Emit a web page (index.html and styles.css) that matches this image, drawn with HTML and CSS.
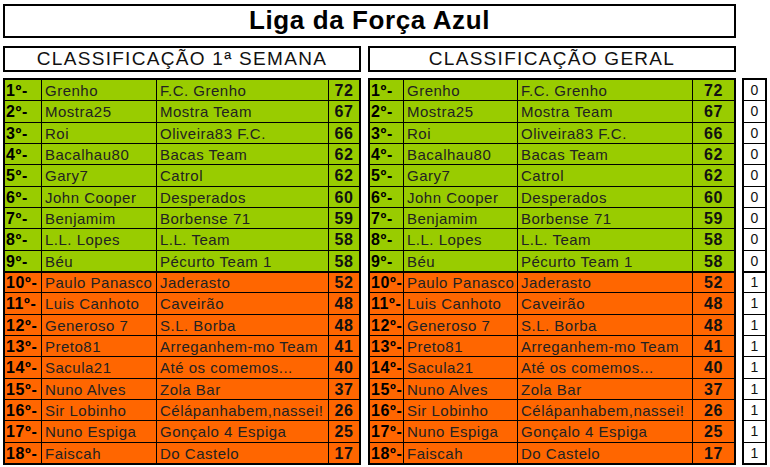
FILE: index.html
```html
<!DOCTYPE html>
<html>
<head>
<meta charset="utf-8">
<link rel="stylesheet" href="styles.css">
</head>
<body>
<div class="page">
  <div class="title">Liga da Força Azul</div>
  <div class="heads">
    <div class="head head-l">CLASSIFICAÇÃO 1ª SEMANA</div>
    <div class="head head-r">CLASSIFICAÇÃO GERAL</div>
  </div>
  <div class="tables">
    <div class="tbl tbl-l">
      <div class="c g rk">1º-</div><div class="c g">Grenho</div><div class="c g">F.C. Grenho</div><div class="c g pt">72</div>
      <div class="c g rk">2º-</div><div class="c g">Mostra25</div><div class="c g">Mostra Team</div><div class="c g pt">67</div>
      <div class="c g rk">3º-</div><div class="c g">Roi</div><div class="c g">Oliveira83 F.C.</div><div class="c g pt">66</div>
      <div class="c g rk">4º-</div><div class="c g">Bacalhau80</div><div class="c g">Bacas Team</div><div class="c g pt">62</div>
      <div class="c g rk">5º-</div><div class="c g">Gary7</div><div class="c g">Catrol</div><div class="c g pt">62</div>
      <div class="c g rk">6º-</div><div class="c g">John Cooper</div><div class="c g">Desperados</div><div class="c g pt">60</div>
      <div class="c g rk">7º-</div><div class="c g">Benjamim</div><div class="c g">Borbense 71</div><div class="c g pt">59</div>
      <div class="c g rk">8º-</div><div class="c g">L.L. Lopes</div><div class="c g">L.L. Team</div><div class="c g pt">58</div>
      <div class="c g rk">9º-</div><div class="c g">Béu</div><div class="c g">Pécurto Team 1</div><div class="c g pt">58</div>
      <div class="c o sep rk">10º-</div><div class="c o sep">Paulo Panasco</div><div class="c o sep">Jaderasto</div><div class="c o sep pt">52</div>
      <div class="c o rk">11º-</div><div class="c o">Luis Canhoto</div><div class="c o">Caveirão</div><div class="c o pt">48</div>
      <div class="c o rk">12º-</div><div class="c o">Generoso 7</div><div class="c o">S.L. Borba</div><div class="c o pt">48</div>
      <div class="c o rk">13º-</div><div class="c o">Preto81</div><div class="c o">Arreganhem-mo Team</div><div class="c o pt">41</div>
      <div class="c o rk">14º-</div><div class="c o">Sacula21</div><div class="c o">Até os comemos...</div><div class="c o pt">40</div>
      <div class="c o rk">15º-</div><div class="c o">Nuno Alves</div><div class="c o">Zola Bar</div><div class="c o pt">37</div>
      <div class="c o rk">16º-</div><div class="c o">Sir Lobinho</div><div class="c o">Célápanhabem,nassei!</div><div class="c o pt">26</div>
      <div class="c o rk">17º-</div><div class="c o">Nuno Espiga</div><div class="c o">Gonçalo 4 Espiga</div><div class="c o pt">25</div>
      <div class="c o rk">18º-</div><div class="c o">Faiscah</div><div class="c o">Do Castelo</div><div class="c o pt">17</div>
    </div>
    <div class="tbl tbl-r">
      <div class="c g rk">1º-</div><div class="c g">Grenho</div><div class="c g">F.C. Grenho</div><div class="c g pt">72</div>
      <div class="c g rk">2º-</div><div class="c g">Mostra25</div><div class="c g">Mostra Team</div><div class="c g pt">67</div>
      <div class="c g rk">3º-</div><div class="c g">Roi</div><div class="c g">Oliveira83 F.C.</div><div class="c g pt">66</div>
      <div class="c g rk">4º-</div><div class="c g">Bacalhau80</div><div class="c g">Bacas Team</div><div class="c g pt">62</div>
      <div class="c g rk">5º-</div><div class="c g">Gary7</div><div class="c g">Catrol</div><div class="c g pt">62</div>
      <div class="c g rk">6º-</div><div class="c g">John Cooper</div><div class="c g">Desperados</div><div class="c g pt">60</div>
      <div class="c g rk">7º-</div><div class="c g">Benjamim</div><div class="c g">Borbense 71</div><div class="c g pt">59</div>
      <div class="c g rk">8º-</div><div class="c g">L.L. Lopes</div><div class="c g">L.L. Team</div><div class="c g pt">58</div>
      <div class="c g rk">9º-</div><div class="c g">Béu</div><div class="c g">Pécurto Team 1</div><div class="c g pt">58</div>
      <div class="c o sep rk">10º-</div><div class="c o sep">Paulo Panasco</div><div class="c o sep">Jaderasto</div><div class="c o sep pt">52</div>
      <div class="c o rk">11º-</div><div class="c o">Luis Canhoto</div><div class="c o">Caveirão</div><div class="c o pt">48</div>
      <div class="c o rk">12º-</div><div class="c o">Generoso 7</div><div class="c o">S.L. Borba</div><div class="c o pt">48</div>
      <div class="c o rk">13º-</div><div class="c o">Preto81</div><div class="c o">Arreganhem-mo Team</div><div class="c o pt">41</div>
      <div class="c o rk">14º-</div><div class="c o">Sacula21</div><div class="c o">Até os comemos...</div><div class="c o pt">40</div>
      <div class="c o rk">15º-</div><div class="c o">Nuno Alves</div><div class="c o">Zola Bar</div><div class="c o pt">37</div>
      <div class="c o rk">16º-</div><div class="c o">Sir Lobinho</div><div class="c o">Célápanhabem,nassei!</div><div class="c o pt">26</div>
      <div class="c o rk">17º-</div><div class="c o">Nuno Espiga</div><div class="c o">Gonçalo 4 Espiga</div><div class="c o pt">25</div>
      <div class="c o rk">18º-</div><div class="c o">Faiscah</div><div class="c o">Do Castelo</div><div class="c o pt">17</div>
    </div>
    <div class="flags">
      <div class="f">0</div><div class="f">0</div><div class="f">0</div><div class="f">0</div><div class="f">0</div>
      <div class="f">0</div><div class="f">0</div><div class="f">0</div><div class="f">0</div>
      <div class="f sep">1</div><div class="f">1</div><div class="f">1</div><div class="f">1</div><div class="f">1</div>
      <div class="f">1</div><div class="f">1</div><div class="f">1</div><div class="f">1</div>
    </div>
  </div>
</div>
</body>
</html>
```

FILE: styles.css
```css
html, body {
  margin: 0;
  padding: 0;
  background: #ffffff;
}
body {
  font-family: "Liberation Sans", Arial, sans-serif;
  color: #000;
}
.page {
  padding: 4px 0 0 3px;
}
.title {
  box-sizing: border-box;
  width: 733px;
  height: 34px;
  border: 2px solid #000;
  font-weight: bold;
  font-size: 26px;
  letter-spacing: 0.6px;
  line-height: 29px;
  text-align: center;
}
.heads {
  display: flex;
  gap: 7px;
  margin-top: 8px;
}
.head {
  box-sizing: border-box;
  height: 26px;
  border: 2px solid #000;
  font-size: 19px;
  letter-spacing: 1.3px;
  line-height: 22px;
  text-align: center;
  color: #111;
}
.head-l { width: 358px; }
.head-r { width: 368px; }
.tables {
  display: flex;
  align-items: flex-start;
  margin-top: 6px;
}
.tbl {
  display: grid;
  grid-auto-rows: 20.33px;
  gap: 1px;
  background: #000;
  border: 2px solid #000;
}
.tbl-l {
  grid-template-columns: 36px 114px 171px 30px;
}
.tbl-r {
  margin-left: 7px;
  grid-template-columns: 33px 113px 174px 41px;
}
.c {
  box-sizing: border-box;
  padding: 1px 0 0 3px;
  font-size: 15px;
  letter-spacing: 0.5px;
  line-height: 19px;
  white-space: nowrap;
  overflow: hidden;
  color: #222;
}
.g { background: #99cc00; }
.o { background: #ff6600; }
.sep {
  border-top: 1px solid #000;
  line-height: 18px;
}
.rk {
  padding-left: 1px;
  font-weight: bold;
  font-size: 16px;
  letter-spacing: 0.6px;
  color: #000;
}
.pt {
  padding-left: 0;
  text-align: center;
  font-weight: bold;
  font-size: 16px;
  letter-spacing: 0.5px;
  color: #111;
}
.flags {
  margin-left: 6px;
  display: grid;
  grid-template-columns: 21px;
  grid-auto-rows: 20.33px;
  gap: 1px;
  background: #000;
  border: 2px solid #000;
}
.f {
  box-sizing: border-box;
  background: #fff;
  text-align: center;
  font-size: 14px;
  line-height: 20px;
  color: #111;
}
.f.sep {
  line-height: 19px;
}
```
